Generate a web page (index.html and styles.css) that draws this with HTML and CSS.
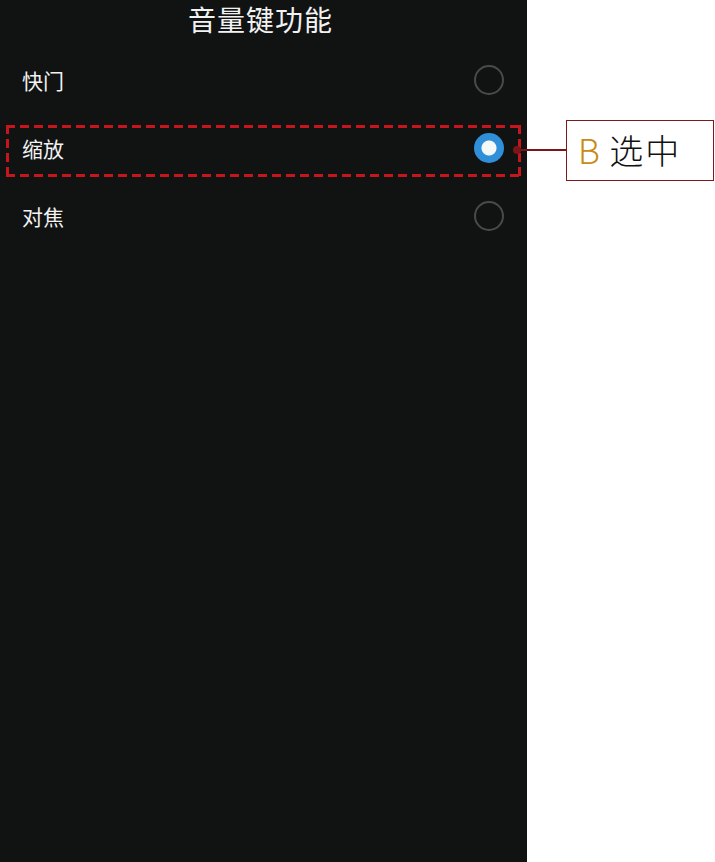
FILE: index.html
```html
<!DOCTYPE html>
<html lang="zh-CN">
<head>
  <meta charset="UTF-8" />
  <meta name="viewport" content="width=device-width, initial-scale=1.0" />
  <title>音量键功能</title>
  <link rel="stylesheet" href="styles.css">
</head>
<body>
  <div class="page">
    <div class="panel">
      <div class="title">音量键功能</div>

      <div class="row">
        <span class="label">快门</span>
        <span class="radio"></span>
      </div>

      <div class="row selected">
        <span class="label">缩放</span>
        <span class="radio checked"></span>
        <span class="highlight"></span>
      </div>

      <div class="row">
        <span class="label">对焦</span>
        <span class="radio"></span>
      </div>
    </div>

    <div class="connector">
      <span class="dot"></span>
      <span class="line"></span>
    </div>
    <div class="callout"><span class="letter">B</span> 选中</div>
  </div>
</body>
</html>
```

FILE: styles.css
```css
* {
  margin: 0;
  padding: 0;
  box-sizing: border-box;
}

body {
  background: #fff;
  font-family: "Noto Sans CJK SC", "Noto Sans", sans-serif;
  width: 715px;
  height: 862px;
  overflow: hidden;
}

.page {
  position: relative;
  width: 715px;
  height: 862px;
}

.panel {
  width: 527px;
  height: 862px;
  background: #111212;
  color: #f2f2f2;
}

.title {
  height: 46px;
  font-size: 28px;
  line-height: 38px;
  text-align: center;
  letter-spacing: 1px;
  padding-right: 6px;
}

.row {
  position: relative;
  height: 68px;
  display: flex;
  align-items: center;
  justify-content: space-between;
  padding: 0 23px 0 22px;
}

.label {
  font-size: 21px;
  line-height: 1;
}

.radio {
  width: 30px;
  height: 30px;
  border-radius: 50%;
  border: 2px solid #4a4a4a;
}

.radio.checked {
  border: none;
  background: radial-gradient(circle, #f4f8f6 0 7px, #2f8fd8 8px);
}

/* long dashes, the browser's dashed border is too short */
.highlight {
  position: absolute;
  left: 6px;
  right: 6px;
  top: 11px;
  bottom: 5px;
  background:
    repeating-linear-gradient(90deg, #c4161c 0 9px, transparent 9px 14px) top / 100% 3px no-repeat,
    repeating-linear-gradient(90deg, #c4161c 0 9px, transparent 9px 14px) bottom / 100% 3px no-repeat,
    repeating-linear-gradient(180deg, #c4161c 0 9px, transparent 9px 14px) left / 3px 100% no-repeat,
    repeating-linear-gradient(180deg, #c4161c 0 9px, transparent 9px 14px) right / 3px 100% no-repeat;
}

.connector {
  position: absolute;
  left: 513px;
  top: 146px;
  width: 54px;
  height: 8px;
  display: flex;
  align-items: center;
}

.dot {
  width: 8px;
  height: 8px;
  border-radius: 50%;
  background: #7c1518;
}

.line {
  flex: 1;
  height: 1.5px;
  background: #7c1518;
}

.callout {
  position: absolute;
  left: 566px;
  top: 120px;
  width: 148px;
  height: 61px;
  border: 1.5px solid #7c1a1d;
  background: #fff;
  color: #111;
  font-size: 34px;
  line-height: 58px;
  padding-left: 11px;
  font-weight: 300;
  letter-spacing: 2px;
}

.letter {
  color: #c88a12;
  letter-spacing: 0;
}
```
